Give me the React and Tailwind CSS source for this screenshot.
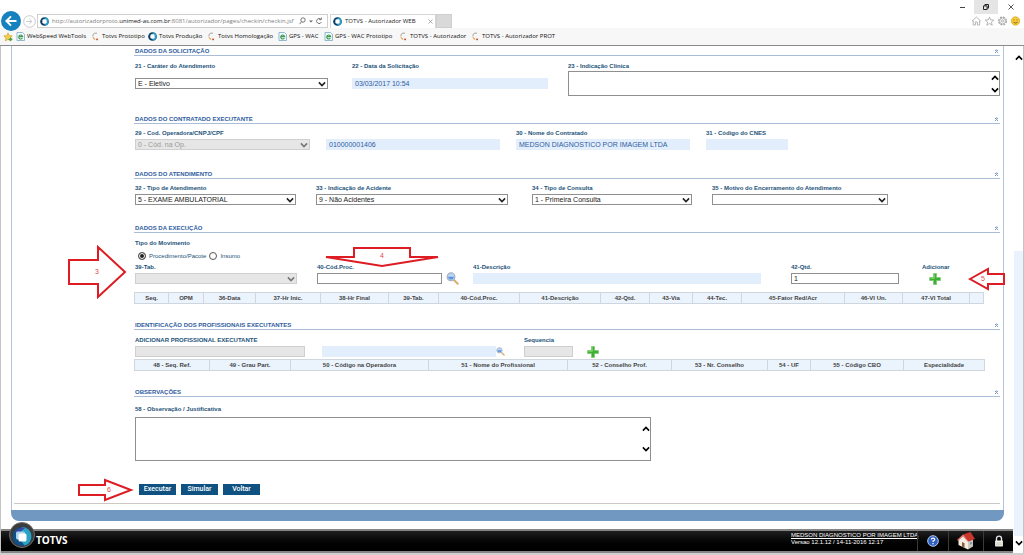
import React, { useState } from "react";
import clsx from "clsx";

const labelClass =
  "block h-2 whitespace-nowrap text-[6px] leading-[8px] font-bold text-[#1c5279]";

const fieldClass =
  "block h-[11px] w-full rounded-none px-[2px] text-[7px] leading-[9px] outline-none";

const boxClass = "border border-[#8f8f8f] bg-white text-[#222]";
const disabledClass = "border border-[#cfcfcf] bg-[#e6e6e6] text-[#9a9a9a]";
const readOnlyClass = "border border-[#e3eefd] bg-[#e3eefd] text-[#2f5c9e]";

const executionColumns = [
  ["Seq.", "w-[34px]"],
  ["OPM", "w-[35px]"],
  ["36-Data", "w-[52px]"],
  ["37-Hr Inic.", "w-[65px]"],
  ["38-Hr Final", "w-[68px]"],
  ["39-Tab.", "w-[50px]"],
  ["40-Cód.Proc.", "w-[81px]"],
  ["41-Descrição", "w-[81px]"],
  ["42-Qtd.", "w-[49px]"],
  ["43-Via", "w-[43px]"],
  ["44-Tec.", "w-[49px]"],
  ["45-Fator Red/Acr", "w-[103px]"],
  ["46-Vl Un.", "w-[58px]"],
  ["47-Vl Total", "w-[67px]"],
  ["", "w-[14px]"],
];

const professionalColumns = [
  ["48 - Seq. Ref.", "w-[75px]"],
  ["49 - Grau Part.", "w-[81px]"],
  ["50 - Código na Operadora", "w-[138px]"],
  ["51 - Nome do Profissional", "w-[139px]"],
  ["52 - Conselho Prof.", "w-[104px]"],
  ["53 - Nr. Conselho", "w-[96px]"],
  ["54 - UF", "w-[43px]"],
  ["55 - Código CBO", "w-[93px]"],
  ["Especialidade", "w-[81px]"],
];

const Chevron = ({ up, className }) => (
  <svg viewBox="0 0 8 6" className={clsx("pointer-events-none h-[6px] w-2", className)}>
    <path
      d={up ? "M.9 4.6 4 1.5l3.1 3.1" : "M.9 1.4 4 4.500l3.100-3.100"}
      fill="none"
      stroke="currentColor"
      strokeWidth="1.6"
    />
  </svg>
);

const TotvsIcon = ({ className }) => (
  <svg viewBox="0 0 10 10" className={clsx("h-[9px] w-[9px] shrink-0", className)}>
    <circle cx="5" cy="5" r="4.8" fill="#0c3d66" />
    <path d="M5 .2a4.800 4.800 0 0 1 0 9.600z" fill="#2a9cc4" />
    <rect x="2.6" y="2.6" width="4.800" height="4.800" rx="1.600" fill="#fff" />
  </svg>
);

const PageIcon = () => (
  <svg viewBox="0 0 9 9" className="h-[9px] w-[9px] shrink-0">
    <path d="M1 .5h5.5L8.5 2.5v6H1z" fill="#f4fbff" stroke="#7aa9c4" strokeWidth=".8" />
    <path
      d="M6.4 6.1A2 2 0 1 1 6.7 4.6H3"
      fill="none"
      stroke="#3c9a4e"
      strokeWidth="1.1"
    />
  </svg>
);

const SpinnerIcon = () => (
  <svg viewBox="0 0 9 9" className="h-[9px] w-[9px] shrink-0">
    <path d="M6 1.2H3.8Q1.6 1.8 1.8 4.4" fill="none" stroke="#a9a19b" strokeWidth="1" />
    <path d="M2 5.2q.6 1.8 2.2 2.2" fill="none" stroke="#e8a04a" strokeWidth="1.1" />
    <rect x="5.2" y="6.6" width="1.8" height="1.6" fill="#c4552d" />
  </svg>
);

const SearchIcon = ({ className }) => (
  <svg viewBox="0 0 14 14" className={className}>
    <path d="m8.6 8.6 4 4" stroke="#d9b070" strokeWidth="2.2" strokeLinecap="round" />
    <circle cx="5.4" cy="5.2" r="4.2" fill="#b9d6f5" stroke="#a3adc0" strokeWidth="1.2" />
    <path d="M2.4 5.2a3 3 0 0 0 6 0z" fill="#5c93e0" />
  </svg>
);

const PlusIcon = () => (
  <svg viewBox="0 0 12 12" className="h-3 w-3">
    <path
      d="M4.5.6h3v3.900h3.900v3H7.500v3.900h-3V7.500H.6v-3h3.900z"
      fill="#3fae35"
      stroke="#7cc772"
      strokeWidth=".8"
      strokeLinejoin="round"
    />
    <path d="M5.400 1.500v3.900H1.500" fill="none" stroke="#86dc70" strokeWidth=".8" />
  </svg>
);

const favorites = [
  ["WebSpeed WebTools", PageIcon, "w-[75px]"],
  ["Totvs Prototipo", SpinnerIcon, "w-[57px]"],
  ["Totvs Produção", TotvsIcon, "w-[59px]"],
  ["Totvs Homologação", SpinnerIcon, "w-[71px]"],
  ["GPS - WAC", PageIcon, "w-[46px]"],
  ["GPS - WAC Prototipo", PageIcon, "w-[75px]"],
  ["TOTVS - Autorizador", SpinnerIcon, "w-[72px]"],
  ["TOTVS - Autorizador PROT", SpinnerIcon, "w-[90px]"],
];

const Browser = () => (
  <header className="h-[46px] border-b border-[#8a8a8a] bg-white font-['Open_Sans',sans-serif] text-[6px] text-[#444]">
    <div className="flex h-[14px] justify-end">
      <button aria-label="Minimizar" className="flex w-6 items-center justify-center">
        <span className="h-px w-[5px] bg-[#444]" />
      </button>
      <button aria-label="Restaurar" className="flex w-6 items-center justify-center bg-[#e5e5e5]">
        <svg viewBox="0 0 6 6" className="h-[6px] w-[6px]" fill="none" stroke="#222">
          <path d="M.5 1.9h3.6v3.6H.5zM1.9 1.9V.5h3.6v3.6H4.1" />
        </svg>
      </button>
      <button aria-label="Fechar" className="flex w-[26px] items-center justify-center">
        <svg viewBox="0 0 6 6" className="h-[6px] w-[6px]" stroke="#444" strokeWidth=".9">
          <path d="m.5.5 5 5m0-5-5 5" />
        </svg>
      </button>
    </div>

    <div className="flex h-[14px] items-center pl-px">
      <button aria-label="Voltar página" className="relative -my-1 h-5 w-5 shrink-0 rounded-full bg-[#1581be]">
        <svg viewBox="0 0 20 20" className="h-5 w-5" fill="none" stroke="#fff" strokeWidth="2">
          <path d="M15.5 10H5.5M10 5.4 5.4 10l4.6 4.6" />
        </svg>
      </button>
      <svg viewBox="0 0 13 13" className="ml-[2px] h-[13px] w-[13px] shrink-0" fill="none" stroke="#c9c9c9">
        <circle cx="6.5" cy="6.5" r="5.8" />
        <path d="M3.5 6.5h5M6.3 4l2.6 2.5L6.3 9" />
      </svg>
      <div className="ml-[1px] flex h-[14px] w-[291px] items-center border border-[#cfcfcf] pr-1 pl-[2px]">
        <TotvsIcon />
        <span className="ml-[3px] flex-1 whitespace-nowrap text-[#808080]">
          http://autorizadorproto.<span className="text-[#111]">unimed-as.com.br</span>
          :8081/autorizador/pages/checkin/checkin.jsf
        </span>
        <svg viewBox="0 0 24 8" className="h-2 w-6 shrink-0" fill="none" stroke="#666">
          <circle cx="4" cy="3" r="2.2" strokeWidth=".9" />
          <path d="M2.4 4.8.6 7.2" strokeWidth=".9" />
          <path d="M10 3.4h4l-2 2z" fill="#666" stroke="none" />
          <path d="M21.8 2.2A2.5 2.5 0 1 0 22.4 5M22.3.5v2.1h-2.2" strokeWidth=".9" />
        </svg>
      </div>
      <div className="ml-[2px] flex h-[14px] w-[106px] items-center border border-b-0 border-[#d5d5d5] pr-[2px] pl-[2px]">
        <TotvsIcon />
        <span className="ml-[3px] flex-1 whitespace-nowrap text-[#222]">TOTVS - Autorizador WEB</span>
        <svg viewBox="0 0 5 5" className="h-[5px] w-[5px]" stroke="#888" strokeWidth=".7">
          <path d="m.5.5 4 4m0-4-4 4" />
        </svg>
      </div>
      <button aria-label="Nova guia" className="h-[14px] w-4 border border-[#cfcfcf] bg-[#d9d9d9]" />
      <svg viewBox="0 0 50 10" className="mr-[3px] ml-auto h-[10px] w-[50px]" fill="none" stroke="#a3a3a3" strokeWidth=".8">
        <path d="M1 5.2 5.4 1l4.4 4.2M2.2 4.6V9h2.2V6h2v3h2.2V4.6" />
        <path d="m18.5 1 1.2 2.9 3.1.2-2.4 2 .8 3.1-2.7-1.7-2.7 1.7.8-3.1-2.4-2 3.1-.2z" />
        <circle cx="31.5" cy="5" r="3.9" strokeWidth="1.2" strokeDasharray="2 1.060" />
        <circle cx="31.5" cy="5" r="2.900" />
        <circle cx="31.5" cy="5" r="1.1" />
        <circle cx="44.5" cy="5" r="4.2" fill="#f5cc3a" stroke="#dba92a" />
        <path d="M43 3.4v1M46 3.4v1M42.4 6.2q2.1 1.8 4.2 0" stroke="#6b5312" />
      </svg>
    </div>

    <nav aria-label="Favoritos" className="flex h-[17px] items-center bg-[#f7f7f7] pl-[3px] text-[#111]">
      <svg viewBox="0 0 10 10" className="mr-[3px] h-[10px] w-[10px] shrink-0">
        <path d="m5 .8 1.2 2.8 3 .3-2.2 2 .7 3L5 7.4 2.3 8.9l.7-3L.8 3.9l3-.3z" fill="#f6cf4b" stroke="#c99b25" strokeWidth=".6" />
        <path d="M5.5 7.3h3M7.2 5.8l1.6 1.5-1.6 1.5" fill="none" stroke="#4aa546" strokeWidth="1.2" />
      </svg>
      {favorites.map(([name, Icon, width]) => (
        <a key={name} href="#" className={clsx("flex shrink-0 items-center gap-[2px] whitespace-nowrap", width)}>
          <Icon />
          {name}
        </a>
      ))}
    </nav>
  </header>
);

const Section = ({ title, className, children }) => (
  <section className={className}>
    <div className="flex h-[10px] items-center justify-between border-b border-[#a9bdd6] pr-[2px] pl-px">
      <h2 className="text-[6px] leading-[8px] font-bold whitespace-nowrap text-[#2f5c9e]">{title}</h2>
      <button aria-label={`Recolher ${title}`}>
        <svg viewBox="0 0 3 4" className="h-1 w-[3px]" fill="none" stroke="#5c80b4" strokeWidth="1">
          <path d="M.2 2 1.500.7 2.800 2M.2 3.800l1.300-1.300 1.300 1.300" />
        </svg>
      </button>
    </div>
    {children}
  </section>
);

const Select = ({ id, options, disabled, ...props }) => (
  <div className="relative">
    <select
      id={id}
      disabled={disabled}
      className={clsx(fieldClass, "appearance-none", disabled ? disabledClass : boxClass)}
      {...props}
    >
      {options.map((option) => (
        <option key={option}>{option}</option>
      ))}
    </select>
    <Chevron className={clsx("absolute top-[3px] right-[2px]", disabled ? "text-[#777]" : "text-[#222]")} />
  </div>
);

const Field = ({ id, label, className, gap = "mt-[2px]", children }) => (
  <div className={className}>
    <label htmlFor={id} className={labelClass}>
      {label}
    </label>
    <div className={gap}>{children}</div>
  </div>
);

const ReadOnly = ({ id, value = "", ...props }) => (
  <input id={id} readOnly value={value} className={clsx(fieldClass, readOnlyClass)} {...props} />
);

const HeadTable = ({ columns, className }) => (
  <div className={clsx("pr-4", className)}>
    <table className="w-full table-fixed border-collapse">
      <thead>
        <tr className="h-[11px] bg-[#ebf3fc]">
          {columns.map(([name, width]) => (
            <th
              key={name}
              className={clsx(
                "border border-[#cfd6de] p-0 text-[6px] leading-[8px] font-bold whitespace-nowrap text-[#444]",
                width
              )}
            >
              {name}
            </th>
          ))}
        </tr>
      </thead>
    </table>
  </div>
);

// Numbered callouts drawn over the form
const Callout = ({ number, points, viewBox, className, textClass }) => (
  <div className={clsx("pointer-events-none absolute flex items-center justify-center", className)}>
    <svg viewBox={viewBox} className="absolute inset-0 h-full w-full overflow-visible">
      <polygon points={points} fill="none" stroke="#dd1c24" strokeWidth="2" />
    </svg>
    <span className={clsx("text-[7px] leading-[8px] text-[#e0454b]", textClass)}>{number}</span>
  </div>
);

const Footer = () => (
  <footer className="relative mr-[10px] flex h-6 items-center border-y-2 border-[#858585] bg-gradient-to-b from-[#1f1f1f] to-black text-white">
    <svg viewBox="0 0 26 26" className="absolute bottom-[3px] left-[8px] h-[26px] w-[26px]">
      <circle cx="13" cy="13" r="12.500" fill="#3c3c3c" stroke="#6e6e6e" />
      <circle cx="13" cy="14.500" r="9.500" fill="#0d4f86" />
      <path d="M13 5a9.500 9.500 0 0 1 3 18.500c-4-2-5-9-3-18.500z" fill="#29a3c4" />
      <path d="M5.500 10Q12 4 16 6l-5 4z" fill="#3a46a6" />
      <rect x="7" y="9.500" width="9" height="8" rx="1.500" fill="#a9d3ee" />
      <rect x="9.500" y="11.500" width="8" height="8" rx="1.500" fill="#fff" />
    </svg>
    <span className="ml-[35px] pb-[2px] font-['Open_Sans',sans-serif] text-[10px] leading-3 font-bold">TOTVS</span>
    <div className="ml-auto w-[126px] pb-1 text-[6px] leading-[7px] whitespace-nowrap">
      <a href="#" className="block underline">
        MEDSON DIAGNOSTICO POR IMAGEM LTDA
      </a>
      <p>Versao 12.1.12 / 14-11-2016 12:17</p>
    </div>
    <button aria-label="Ajuda" className="flex h-full w-[31px] items-center justify-center border-l border-[#3a3a3a]">
      <svg viewBox="0 0 12 12" className="h-3 w-3">
        <circle cx="6" cy="6" r="5.3" fill="#2f5fc0" stroke="#b9cbf0" />
        <path d="M4.3 4.6q0-1.5 1.7-1.5t1.7 1.4Q7.7 5.5 6.1 6v1M6 8.1v1.1" fill="none" stroke="#fff" strokeWidth="1.2" />
      </svg>
    </button>
    <button aria-label="Início" className="flex h-full w-[35px] items-center justify-center border-l border-[#3a3a3a]">
      <svg viewBox="0 0 20 20" className="h-5 w-5">
        <path d="m2.5 9 5-5 4.500 6v8.500L2.500 14z" fill="#f3ede4" />
        <path d="M12 10l5-2v7.500l-5 3z" fill="#cfc7bb" />
        <path d="M7 3.500 14.500 1 19 8l-6.500 2.500z" fill="#c8372d" />
        <path d="M7 3.500 1 9l1.200.8L7 5.500l5 5.500.8-.5z" fill="#e9776c" />
        <path d="M6 11l2.500 1.200v4.600L6 15.500z" fill="#8d5a34" />
        <path d="M14 11.500l1.800-.7v2.200l-1.800.8z" fill="#6f8fb5" />
      </svg>
    </button>
    <button aria-label="Sair" className="flex h-full w-[30px] items-center justify-center border-l border-[#3a3a3a]">
      <svg viewBox="0 0 10 12" className="h-3 w-[10px]">
        <path d="M2.500 6V3.600a2.500 2.500 0 0 1 5 0V6" fill="none" stroke="#e6e6e6" strokeWidth="1.400" />
        <rect x="1" y="5.500" width="8" height="6" rx=".8" fill="#f1f1ea" />
        <path d="M1 8h8M1 9.800h8" stroke="#b9b9a8" strokeWidth=".7" />
      </svg>
    </button>
  </footer>
);

const buttonClass =
  "h-[11px] w-[37px] bg-[#0f5180] text-center font-['Roboto',sans-serif] text-[7px] leading-[11px] font-medium text-white";

const App = () => {
  const [movement, setMovement] = useState("procedimento");
  const [quantity, setQuantity] = useState("1");
  const [code, setCode] = useState("");

  return (
    <div className="relative bg-white font-['Liberation_Sans',Arial,sans-serif]">
      <Browser />

      <div className="relative border-x border-[#c4c4c4]">
        <main className="mr-[19px] ml-[10px]">
          <div className="border-x border-[#b3c3d9] pr-[3px] pl-[2px]">
            <div className="border-b border-[#cdc8c6] pb-2 pl-[120px]">
              <Section title="DADOS DA SOLICITAÇÃO">
                <div className="grid grid-cols-[217fr_216fr_432fr] pt-[6px] pl-px">
                  <Field id="carater" label="21 - Caráter do Atendimento" className="pr-6" gap="mt-2">
                    <Select id="carater" options={["E - Eletivo"]} />
                  </Field>
                  <Field id="data" label="22 - Data da Solicitação" className="pr-5" gap="mt-2">
                    <ReadOnly id="data" value="03/03/2017 10:54" />
                  </Field>
                  <Field id="indicacao" label="23 - Indicação Clínica" gap="relative mt-px">
                    <textarea id="indicacao" className={clsx("block h-[25px] w-full resize-none", boxClass)} />
                    <Chevron up className="absolute top-1 right-px" />
                    <Chevron className="absolute right-px bottom-[3px]" />
                  </Field>
                </div>
              </Section>

              <Section title="DADOS DO CONTRATADO EXECUTANTE" className="mt-[18px]">
                <div className="grid grid-cols-[191fr_190fr_190fr_294fr] items-end pt-[5px] pl-px">
                  <Field id="operadora" label="29 - Cod. Operadora/CNPJ/CPF" className="pr-4">
                    <Select id="operadora" options={["0 - Cód. na Op."]} disabled />
                  </Field>
                  <div className="pr-4">
                    <ReadOnly aria-label="Código do contratado" value="010000001406" />
                  </div>
                  <Field id="contratado" label="30 - Nome do Contratado" className="pr-4">
                    <ReadOnly id="contratado" value="MEDSON DIAGNOSTICO POR IMAGEM LTDA" />
                  </Field>
                  <Field id="cnes" label="31 - Código do CNES" className="w-[82px]">
                    <ReadOnly id="cnes" />
                  </Field>
                </div>
              </Section>

              <Section title="DADOS DO ATENDIMENTO" className="mt-[19px]">
                <div className="grid grid-cols-[181fr_216fr_180fr_288fr] pt-[5px] pl-px">
                  <Field id="atendimento" label="32 - Tipo de Atendimento" className="pr-5">
                    <Select id="atendimento" options={["5 - EXAME AMBULATORIAL"]} />
                  </Field>
                  <Field id="acidente" label="33 - Indicação de Acidente" className="pr-6">
                    <Select id="acidente" options={["9 - Não Acidentes"]} />
                  </Field>
                  <Field id="consulta" label="34 - Tipo de Consulta" className="pr-5">
                    <Select id="consulta" options={["1 - Primeira Consulta"]} />
                  </Field>
                  <Field id="motivo" label="35 - Motivo do Encerramento do Atendimento" className="pr-28">
                    <Select id="motivo" options={[""]} />
                  </Field>
                </div>
              </Section>

              <Section title="DADOS DA EXECUÇÃO" className="mt-[18px]">
                <fieldset className="mt-[6px] pl-px">
                  <legend className={labelClass}>Tipo do Movimento</legend>
                  <div className="mt-1 flex h-[10px] items-center gap-[3px] pl-[3px] text-[6px] leading-[8px] text-[#1c5279]">
                    {[
                      ["procedimento", "Procedimento/Pacote"],
                      ["insumo", "Insumo"],
                    ].map(([value, text]) => (
                      <label key={value} className="flex items-center gap-[3px]">
                        <input
                          type="radio"
                          name="movimento"
                          checked={movement === value}
                          onChange={() => setMovement(value)}
                          className="h-2 w-2 appearance-none rounded-full border border-[#555] bg-white checked:bg-[#222] checked:shadow-[inset_0_0_0_1px_#fff]"
                        />
                        {text}
                      </label>
                    ))}
                  </div>
                </fieldset>

                <div className="grid grid-cols-[182fr_156fr_318fr_131fr_78fr] pt-[2px] pl-px">
                  <Field id="tabela" label="39-Tab." className="pr-5">
                    <Select id="tabela" options={[""]} disabled />
                  </Field>
                  <Field id="codigo" label="40-Cód.Proc." gap="mt-[2px] flex h-[11px] items-center gap-1 pr-[14px]">
                    <input
                      id="codigo"
                      value={code}
                      onChange={(e) => setCode(e.target.value)}
                      className={clsx(fieldClass, boxClass)}
                    />
                    <button aria-label="Buscar procedimento" className="shrink-0">
                      <SearchIcon className="h-[13px] w-[13px]" />
                    </button>
                  </Field>
                  <Field id="descricao" label="41-Descrição" className="pr-[30px]">
                    <ReadOnly id="descricao" />
                  </Field>
                  <Field id="quantidade" label="42-Qtd." className="pr-[23px]">
                    <input
                      id="quantidade"
                      value={quantity}
                      onChange={(e) => setQuantity(e.target.value)}
                      className={clsx(fieldClass, boxClass)}
                    />
                  </Field>
                  <div className="flex flex-col items-start">
                    <label htmlFor="adicionar" className={labelClass}>
                      Adicionar
                    </label>
                    <button id="adicionar" className="mt-[2px] ml-[7px] h-[11px]">
                      <PlusIcon />
                    </button>
                  </div>
                </div>
                <HeadTable columns={executionColumns} className="mt-2" />
              </Section>

              <Section title="IDENTIFICAÇÃO DOS PROFISSIONAIS EXECUTANTES" className="mt-4">
                <div className="grid grid-cols-[187fr_202fr_63fr_413fr] items-end pt-[6px] pl-px">
                  <Field id="profissional" label="ADICIONAR PROFISSIONAL EXECUTANTE" className="pr-[17px]">
                    <input id="profissional" disabled className={clsx(fieldClass, disabledClass)} />
                  </Field>
                  <div className="flex items-center pr-[19px]">
                    <ReadOnly aria-label="Nome do profissional" />
                    <button aria-label="Buscar profissional" className="shrink-0">
                      <SearchIcon className="h-[9px] w-[9px]" />
                    </button>
                  </div>
                  <Field id="sequencia" label="Sequencia" className="pr-[14px]">
                    <input id="sequencia" disabled className={clsx(fieldClass, disabledClass)} />
                  </Field>
                  <button aria-label="Adicionar profissional" className="h-[11px] w-3">
                    <PlusIcon />
                  </button>
                </div>
                <HeadTable columns={professionalColumns} className="mt-[2px]" />
              </Section>

              <Section title="OBSERVAÇÕES" className="mt-4">
                <Field
                  id="observacao"
                  label="58 - Observação / Justificativa"
                  className="pt-2 pl-px"
                  gap="relative mt-1 max-w-[516px]"
                >
                  <textarea id="observacao" className={clsx("block h-11 w-full resize-none", boxClass)} />
                  <Chevron up className="absolute top-[9px] right-px" />
                  <Chevron className="absolute right-px bottom-[9px]" />
                </Field>
              </Section>

              <div className="mt-[23px] flex gap-[5px] pl-[5px]">
                <button className={buttonClass}>Executar</button>
                <button className={buttonClass}>Simular</button>
                <button className={buttonClass}>Voltar</button>
              </div>
            </div>
            <div className="h-[6px]" />
          </div>
          <div className="h-[11px] rounded-b-lg bg-[#7098c1]" />
        </main>

        <div className="mt-2">
          <Footer />
        </div>

        <div className="absolute inset-y-0 right-0 flex w-[9px] flex-col items-center bg-white">
          <Chevron up className="mt-[9px]" />
          <div className="mt-[190px] w-full flex-1 bg-[#e9f2fd]" />
          <Chevron className="mt-1 mb-[7px]" />
        </div>
      </div>
      <div className="h-[2px] bg-[#d0d0d0]" />

      <Callout
        number="3"
        viewBox="0 0 58 52"
        points="1,14 30,14 30,1 57,26 30,51 30,38 1,38"
        className="top-[246px] left-[68px] h-[52px] w-[58px]"
      />
      <Callout
        number="4"
        viewBox="0 0 116 21"
        points="30,1 86,1 86,10 114,10 58,19 2,10 30,10"
        className="top-[247px] left-[324px] h-[21px] w-[116px]"
        textClass="-mt-1"
      />
      <Callout
        number="5"
        viewBox="0 0 36 22"
        points="1,11 19,1 19,6 35,6 35,16 19,16 19,21"
        className="top-[268px] left-[969px] h-[22px] w-[36px]"
        textClass="-ml-2"
      />
      <Callout
        number="6"
        viewBox="0 0 54 22"
        points="1,6 27,6 27,1 53,11 27,21 27,16 1,16"
        className="top-[479px] left-[78px] h-[22px] w-[54px]"
        textClass="ml-2"
      />
    </div>
  );
};

export default App;
